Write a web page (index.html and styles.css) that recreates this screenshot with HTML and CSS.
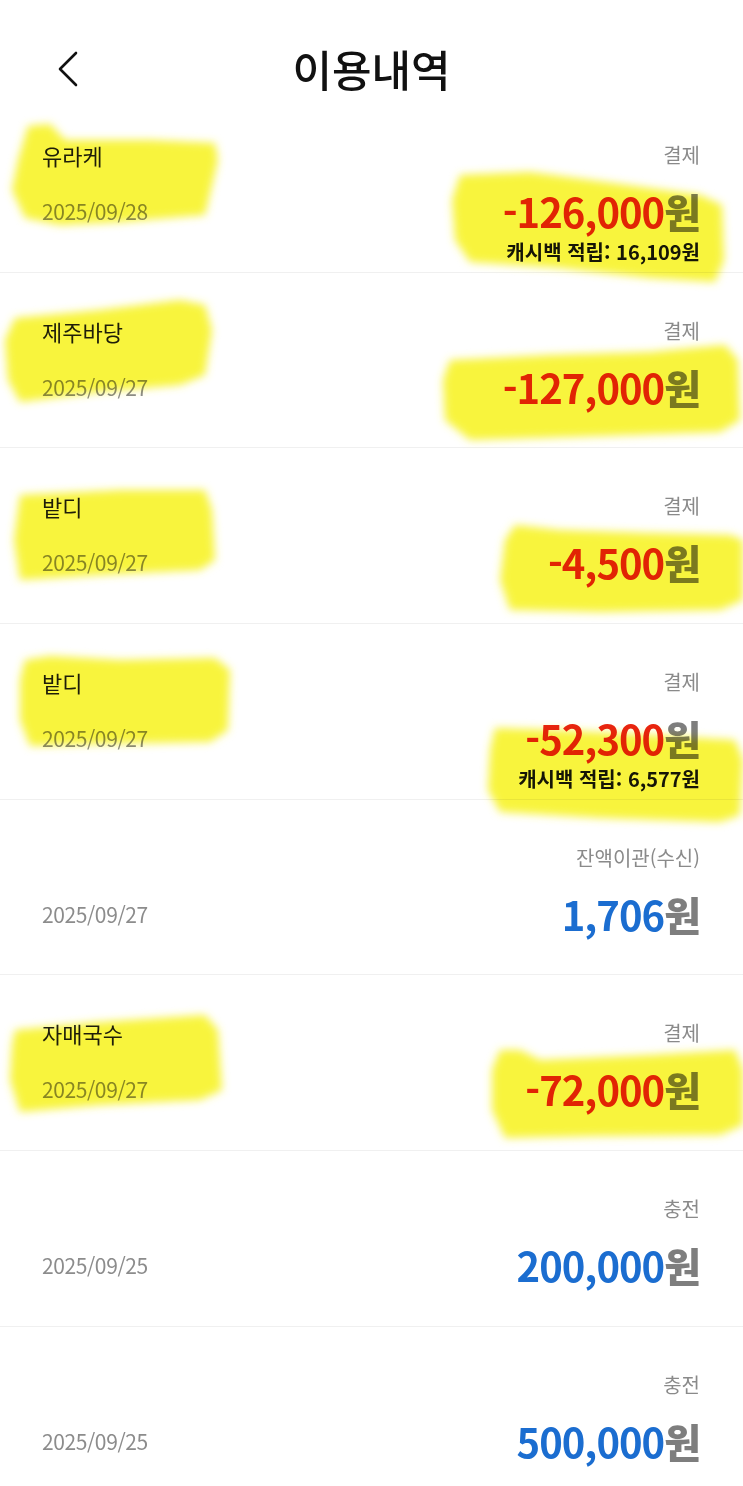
FILE: index.html
```html
<!DOCTYPE html>
<html lang="ko">
  <head>
    <meta charset="UTF-8" />
    <meta name="viewport" content="width=device-width, initial-scale=1.0" />
    <title>이용내역</title>
    <link rel="stylesheet" href="styles.css">
  </head>
  <body>
    <header class="top-bar">
      <button class="back" type="button" aria-label="뒤로">
        <svg width="26" height="38" viewBox="0 0 26 38">
          <polyline points="21,3 5,19 21,35" fill="none" stroke="#111" stroke-width="2.6" stroke-linecap="round" stroke-linejoin="round" />
        </svg>
      </button>
      <h1>이용내역</h1>
    </header>

    <ul class="history">
      <li class="entry">
        <div class="line">
          <span class="name">유라케</span>
          <span class="kind">결제</span>
        </div>
        <div class="line amount-line">
          <span class="date">2025/09/28</span>
          <span class="amount minus">-126,000<b>원</b></span>
        </div>
        <p class="cashback">캐시백 적립: 16,109원</p>
      </li>
      <li class="entry">
        <div class="line">
          <span class="name">제주바당</span>
          <span class="kind">결제</span>
        </div>
        <div class="line amount-line">
          <span class="date">2025/09/27</span>
          <span class="amount minus">-127,000<b>원</b></span>
        </div>
      </li>
      <li class="entry">
        <div class="line">
          <span class="name">밭디</span>
          <span class="kind">결제</span>
        </div>
        <div class="line amount-line">
          <span class="date">2025/09/27</span>
          <span class="amount minus">-4,500<b>원</b></span>
        </div>
      </li>
      <li class="entry">
        <div class="line">
          <span class="name">밭디</span>
          <span class="kind">결제</span>
        </div>
        <div class="line amount-line">
          <span class="date">2025/09/27</span>
          <span class="amount minus">-52,300<b>원</b></span>
        </div>
        <p class="cashback">캐시백 적립: 6,577원</p>
      </li>
      <li class="entry">
        <div class="line">
          <span class="name"></span>
          <span class="kind">잔액이관(수신)</span>
        </div>
        <div class="line amount-line">
          <span class="date">2025/09/27</span>
          <span class="amount plus">1,706<b>원</b></span>
        </div>
      </li>
      <li class="entry">
        <div class="line">
          <span class="name">자매국수</span>
          <span class="kind">결제</span>
        </div>
        <div class="line amount-line">
          <span class="date">2025/09/27</span>
          <span class="amount minus">-72,000<b>원</b></span>
        </div>
      </li>
      <li class="entry">
        <div class="line">
          <span class="name"></span>
          <span class="kind">충전</span>
        </div>
        <div class="line amount-line">
          <span class="date">2025/09/25</span>
          <span class="amount plus">200,000<b>원</b></span>
        </div>
      </li>
      <li class="entry">
        <div class="line">
          <span class="name"></span>
          <span class="kind">충전</span>
        </div>
        <div class="line amount-line">
          <span class="date">2025/09/25</span>
          <span class="amount plus">500,000<b>원</b></span>
        </div>
      </li>
    </ul>

    <!-- highlighter marks drawn over the screenshot -->
    <svg class="marks" width="743" height="1486" viewBox="0 0 743 1486">
      <defs>
        <filter id="soft" x="-10%" y="-20%" width="120%" height="140%">
          <feGaussianBlur stdDeviation="4" />
        </filter>
      </defs>
      <g fill="#f8f43c" filter="url(#soft)">
        <polygon points="28,126 50,124 65,140 150,140 215,143 218,160 205,215 120,222 60,225 25,218 12,190 18,160" />
        <polygon points="460,175 530,172 590,180 700,195 722,205 724,260 715,282 650,278 560,268 470,262 455,240 452,200" />
        <polygon points="15,318 100,310 180,300 205,305 212,330 205,375 180,385 100,392 20,402 8,380 5,340" />
        <polygon points="450,360 550,355 650,352 725,345 738,360 740,420 720,432 600,436 470,440 445,420 443,380" />
        <polygon points="20,495 120,490 205,490 212,510 215,560 200,570 100,575 20,580 14,540" />
        <polygon points="515,525 560,530 650,533 730,535 743,540 743,600 720,610 600,612 510,610 500,580 505,540" />
        <polygon points="25,660 50,656 120,660 215,658 230,670 228,730 210,742 100,744 30,746 20,720 20,680" />
        <polygon points="495,728 560,730 650,735 735,740 743,760 740,815 720,822 600,818 500,812 488,790 490,750" />
        <polygon points="15,1030 100,1022 205,1015 218,1030 222,1090 200,1100 100,1105 20,1112 10,1080 12,1045" />
        <polygon points="500,1050 520,1050 540,1060 650,1055 735,1050 743,1070 743,1125 720,1135 600,1136 505,1138 492,1110 492,1070" />
      </g>
    </svg>
  </body>
</html>
```

FILE: styles.css
```css
body {
  margin: 0;
  position: relative;
  height: 1486px;
  overflow: hidden;
  background: #fff;
  font-family: "Noto Sans CJK KR", "Noto Sans", sans-serif;
  color: #222;
}
.top-bar {
  height: 97px;
  display: flex;
  justify-content: center;
  align-items: flex-start;
  position: relative;
}
.top-bar h1 {
  margin: 0;
  padding-top: 41px;
  font-size: 43px;
  line-height: 54px;
  font-weight: 500;
  color: #111;
}
.back {
  position: absolute;
  left: 55px;
  top: 50px;
  border: 0;
  padding: 0;
  background: none;
}
.history {
  list-style: none;
  margin: 0;
  padding: 0;
}
.entry {
  box-sizing: border-box;
  height: 175.7px;
  padding: 44px 43px 0 42px;
  border-bottom: 1px solid #f0f0f0;
}
.line {
  display: flex;
  justify-content: space-between;
  align-items: center;
}
.name {
  font-size: 22px;
  line-height: 28px;
  color: #1e1e1e;
}
.kind {
  font-size: 20px;
  line-height: 28px;
  color: #8a8a8a;
}
.amount-line {
  margin-top: 19px;
}
.date {
  font-size: 21px;
  line-height: 28px;
  color: #8c8c8c;
  letter-spacing: -0.4px;
}
.amount {
  font-size: 40px;
  line-height: 46px;
  font-weight: 700;
  letter-spacing: -1px;
}
.amount b {
  color: #7e7e7e;
}
.minus {
  color: #e8250f;
}
.plus {
  color: #1b6dd0;
}
.cashback {
  margin: 6px 0 0;
  text-align: right;
  font-size: 20px;
  line-height: 24px;
  font-weight: 700;
  color: #151515;
}
.marks {
  position: absolute;
  top: 0;
  left: 0;
  mix-blend-mode: multiply;
  pointer-events: none;
}
```
